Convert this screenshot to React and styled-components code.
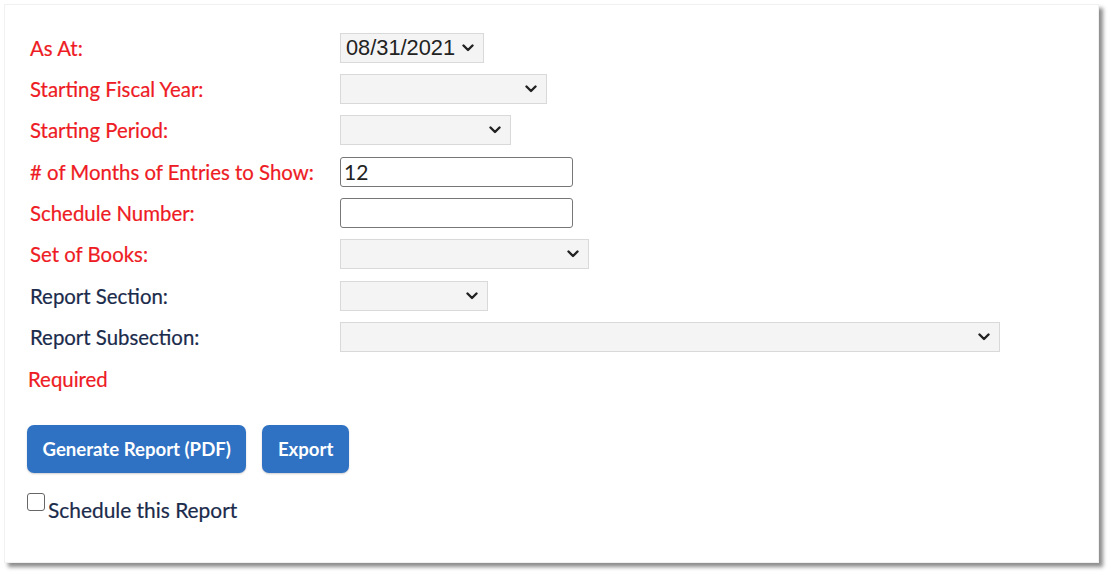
import React from "react";
import styled, { createGlobalStyle } from "styled-components";

const Global = createGlobalStyle`
  html, body { margin: 0; padding: 0; background: #ffffff; }
  body { font-family: Lato, "Open Sans", sans-serif; }
`;

const Page = styled.div`
  width: 1111px;
  height: 575px;
  padding: 4px 12px 12px 4px;
  box-sizing: border-box;
  background: #fff;
`;

const Card = styled.div`
  width: 1095px;
  height: 559px;
  box-sizing: border-box;
  background: #fff;
  border: 1px solid #f1f1f1;
  box-shadow: 4px 4px 4px rgba(0, 0, 0, 0.45);
  padding: 22px 0 0 22px;
  display: flex;
  flex-direction: column;
`;

const Form = styled.div`
  display: grid;
  grid-template-columns: 313px auto;
  grid-auto-rows: 41.36px;
  align-items: center;
`;

const Label = styled.div`
  font-family: Lato, sans-serif;
  font-size: 20.4px;
  color: ${(p) => (p.$required ? "#ee1b24" : "#1b2b4b")};
  padding-left: 3px;
  white-space: nowrap;
  -webkit-text-stroke: 0.2px currentColor;
`;

const SelectBox = styled.div`
  width: ${(p) => p.$w}px;
  height: 30px;
  box-sizing: border-box;
  background: #f4f4f4;
  border: 1px solid #d9d9d9;
  display: flex;
  align-items: center;
  justify-content: space-between;
  padding: 0 9px 0 5px;
  font-family: "Liberation Sans", Arial, sans-serif;
  font-size: 21.8px;
  color: #222;
`;

const Chevron = () => (
  <svg width="12" height="8" viewBox="0 0 12 8">
    <path d="M1.5 1.5 L6 6 L10.5 1.5" fill="none" stroke="#222" strokeWidth="2.4" strokeLinecap="round" strokeLinejoin="round" />
  </svg>
);

const TextInput = styled.div`
  width: 233px;
  height: 30px;
  box-sizing: border-box;
  border: 1px solid #777;
  border-radius: 3px;
  background: #fff;
  display: flex;
  align-items: center;
  padding-left: 3px;
  font-family: Lato, sans-serif;
  font-size: 21px;
  color: #222;
`;

const ValidationRow = styled.div`
  grid-column: 1 / span 2;
  font-family: Lato, sans-serif;
  font-size: 20.4px;
  color: #ee1b24;
  margin-left: 1px;
  -webkit-text-stroke: 0.2px currentColor;
`;

const Buttons = styled.div`
  display: flex;
  gap: 16px;
  margin-top: 26px;
  margin-left: 0;
`;

const Button = styled.button`
  height: 48px;
  padding: 0 15.5px;
  border: none;
  border-radius: 7px;
  background: #2f72c3;
  color: #fff;
  font-family: Lato, sans-serif;
  font-weight: 700;
  font-size: 18.6px;
  box-shadow: 0 1px 2px rgba(0, 0, 0, 0.2);
`;

const CheckRow = styled.label`
  display: flex;
  align-items: flex-start;
  margin-top: 20px;
  margin-left: 0;
  font-family: Lato, sans-serif;
  font-size: 20.9px;
  color: #1b2b4b;
  -webkit-text-stroke: 0.2px currentColor;
`;

const Box = styled.span`
  width: 18px;
  height: 18px;
  box-sizing: border-box;
  border: 1.5px solid #666;
  border-radius: 3px;
  margin-right: 3px;
  background: #fff;
`;

const CheckText = styled.span`
  margin-top: 4px;
`;

const rows = [
  { label: "As At:", req: true, kind: "select", w: 144, value: "08/31/2021" },
  { label: "Starting Fiscal Year:", req: true, kind: "select", w: 207 },
  { label: "Starting Period:", req: true, kind: "select", w: 171 },
  { label: "# of Months of Entries to Show:", req: true, kind: "input", value: "12" },
  { label: "Schedule Number:", req: true, kind: "input", value: "" },
  { label: "Set of Books:", req: true, kind: "select", w: 249 },
  { label: "Report Section:", req: false, kind: "select", w: 148 },
  { label: "Report Subsection:", req: false, kind: "select", w: 660 },
];

export default function App() {
  return (
    <>
      <Global />
      <Page>
        <Card>
          <Form>
            {rows.map((r) => (
              <React.Fragment key={r.label}>
                <Label $required={r.req}>{r.label}</Label>
                {r.kind === "select" ? (
                  <SelectBox $w={r.w}>
                    <span>{r.value || ""}</span>
                    <Chevron />
                  </SelectBox>
                ) : (
                  <TextInput>{r.value}</TextInput>
                )}
              </React.Fragment>
            ))}
            <ValidationRow>Required</ValidationRow>
          </Form>
          <Buttons>
            <Button>Generate Report (PDF)</Button>
            <Button>Export</Button>
          </Buttons>
          <CheckRow>
            <Box />
            <CheckText>Schedule this Report</CheckText>
          </CheckRow>
        </Card>
      </Page>
    </>
  );
}
